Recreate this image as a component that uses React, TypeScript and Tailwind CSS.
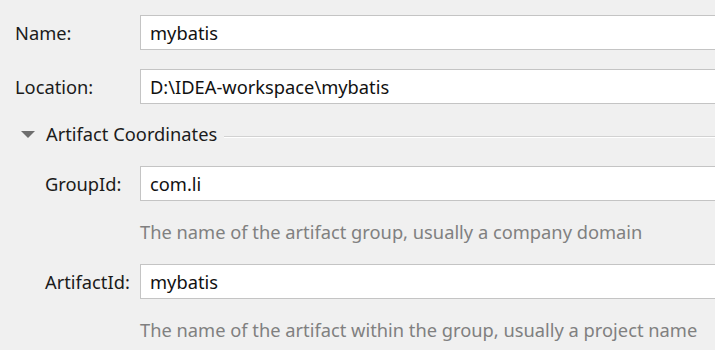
import React from 'react';

const font = { fontFamily: '"Noto Sans", "Open Sans", sans-serif' };

function Field({ label, value, indent }: { label: string; value: string; indent?: boolean }) {
  return (
    <div className="flex items-center h-[35px]">
      <div className={`w-[140px] shrink-0 text-[18.3px] text-[#1b1b1b] ${indent ? 'pl-[45px]' : 'pl-[15px]'}`}>
        {label}
      </div>
      <div className="flex-1 -mr-4 h-[35px] bg-white border border-[#c4c4c4] flex items-center pl-[9px] text-[18.3px] text-[#111]">
        {value}
      </div>
    </div>
  );
}

function Hint({ text }: { text: string }) {
  return <div className="h-[24px] flex items-center pl-[140px] text-[18.3px] text-[#808080]">{text}</div>;
}

export default function App() {
  return (
    <div className="w-[715px] h-[350px] overflow-hidden bg-[#f0f0f0] pt-[15px]" style={font}>
      <Field label="Name:" value="mybatis" />
      <div className="mt-[19px]">
        <Field label="Location:" value="D:\IDEA-workspace\mybatis" />
      </div>

      {/* Artifact Coordinates section */}
      <div className="mt-[17px] h-[26px] flex items-center">
        <svg width="14" height="7" viewBox="0 0 14 7" className="ml-[21px] shrink-0">
          <polygon points="0,0 14,0 7,7" fill="#6e6e6e" />
        </svg>
        <span className="ml-[11px] text-[18.3px] text-[#1b1b1b] whitespace-nowrap">Artifact Coordinates</span>
        <div className="flex-1 ml-[7px] mt-[6px] border-t border-[#d2d2d2] border-b border-b-white" />
      </div>

      <div className="mt-[19px]">
        <Field label="GroupId:" value="com.li" indent />
      </div>
      <div className="mt-[19px]">
        <Hint text="The name of the artifact group, usually a company domain" />
      </div>
      <div className="mt-[20px]">
        <Field label="ArtifactId:" value="mybatis" indent />
      </div>
      <div className="mt-[19px]">
        <Hint text="The name of the artifact within the group, usually a project name" />
      </div>
    </div>
  );
}
